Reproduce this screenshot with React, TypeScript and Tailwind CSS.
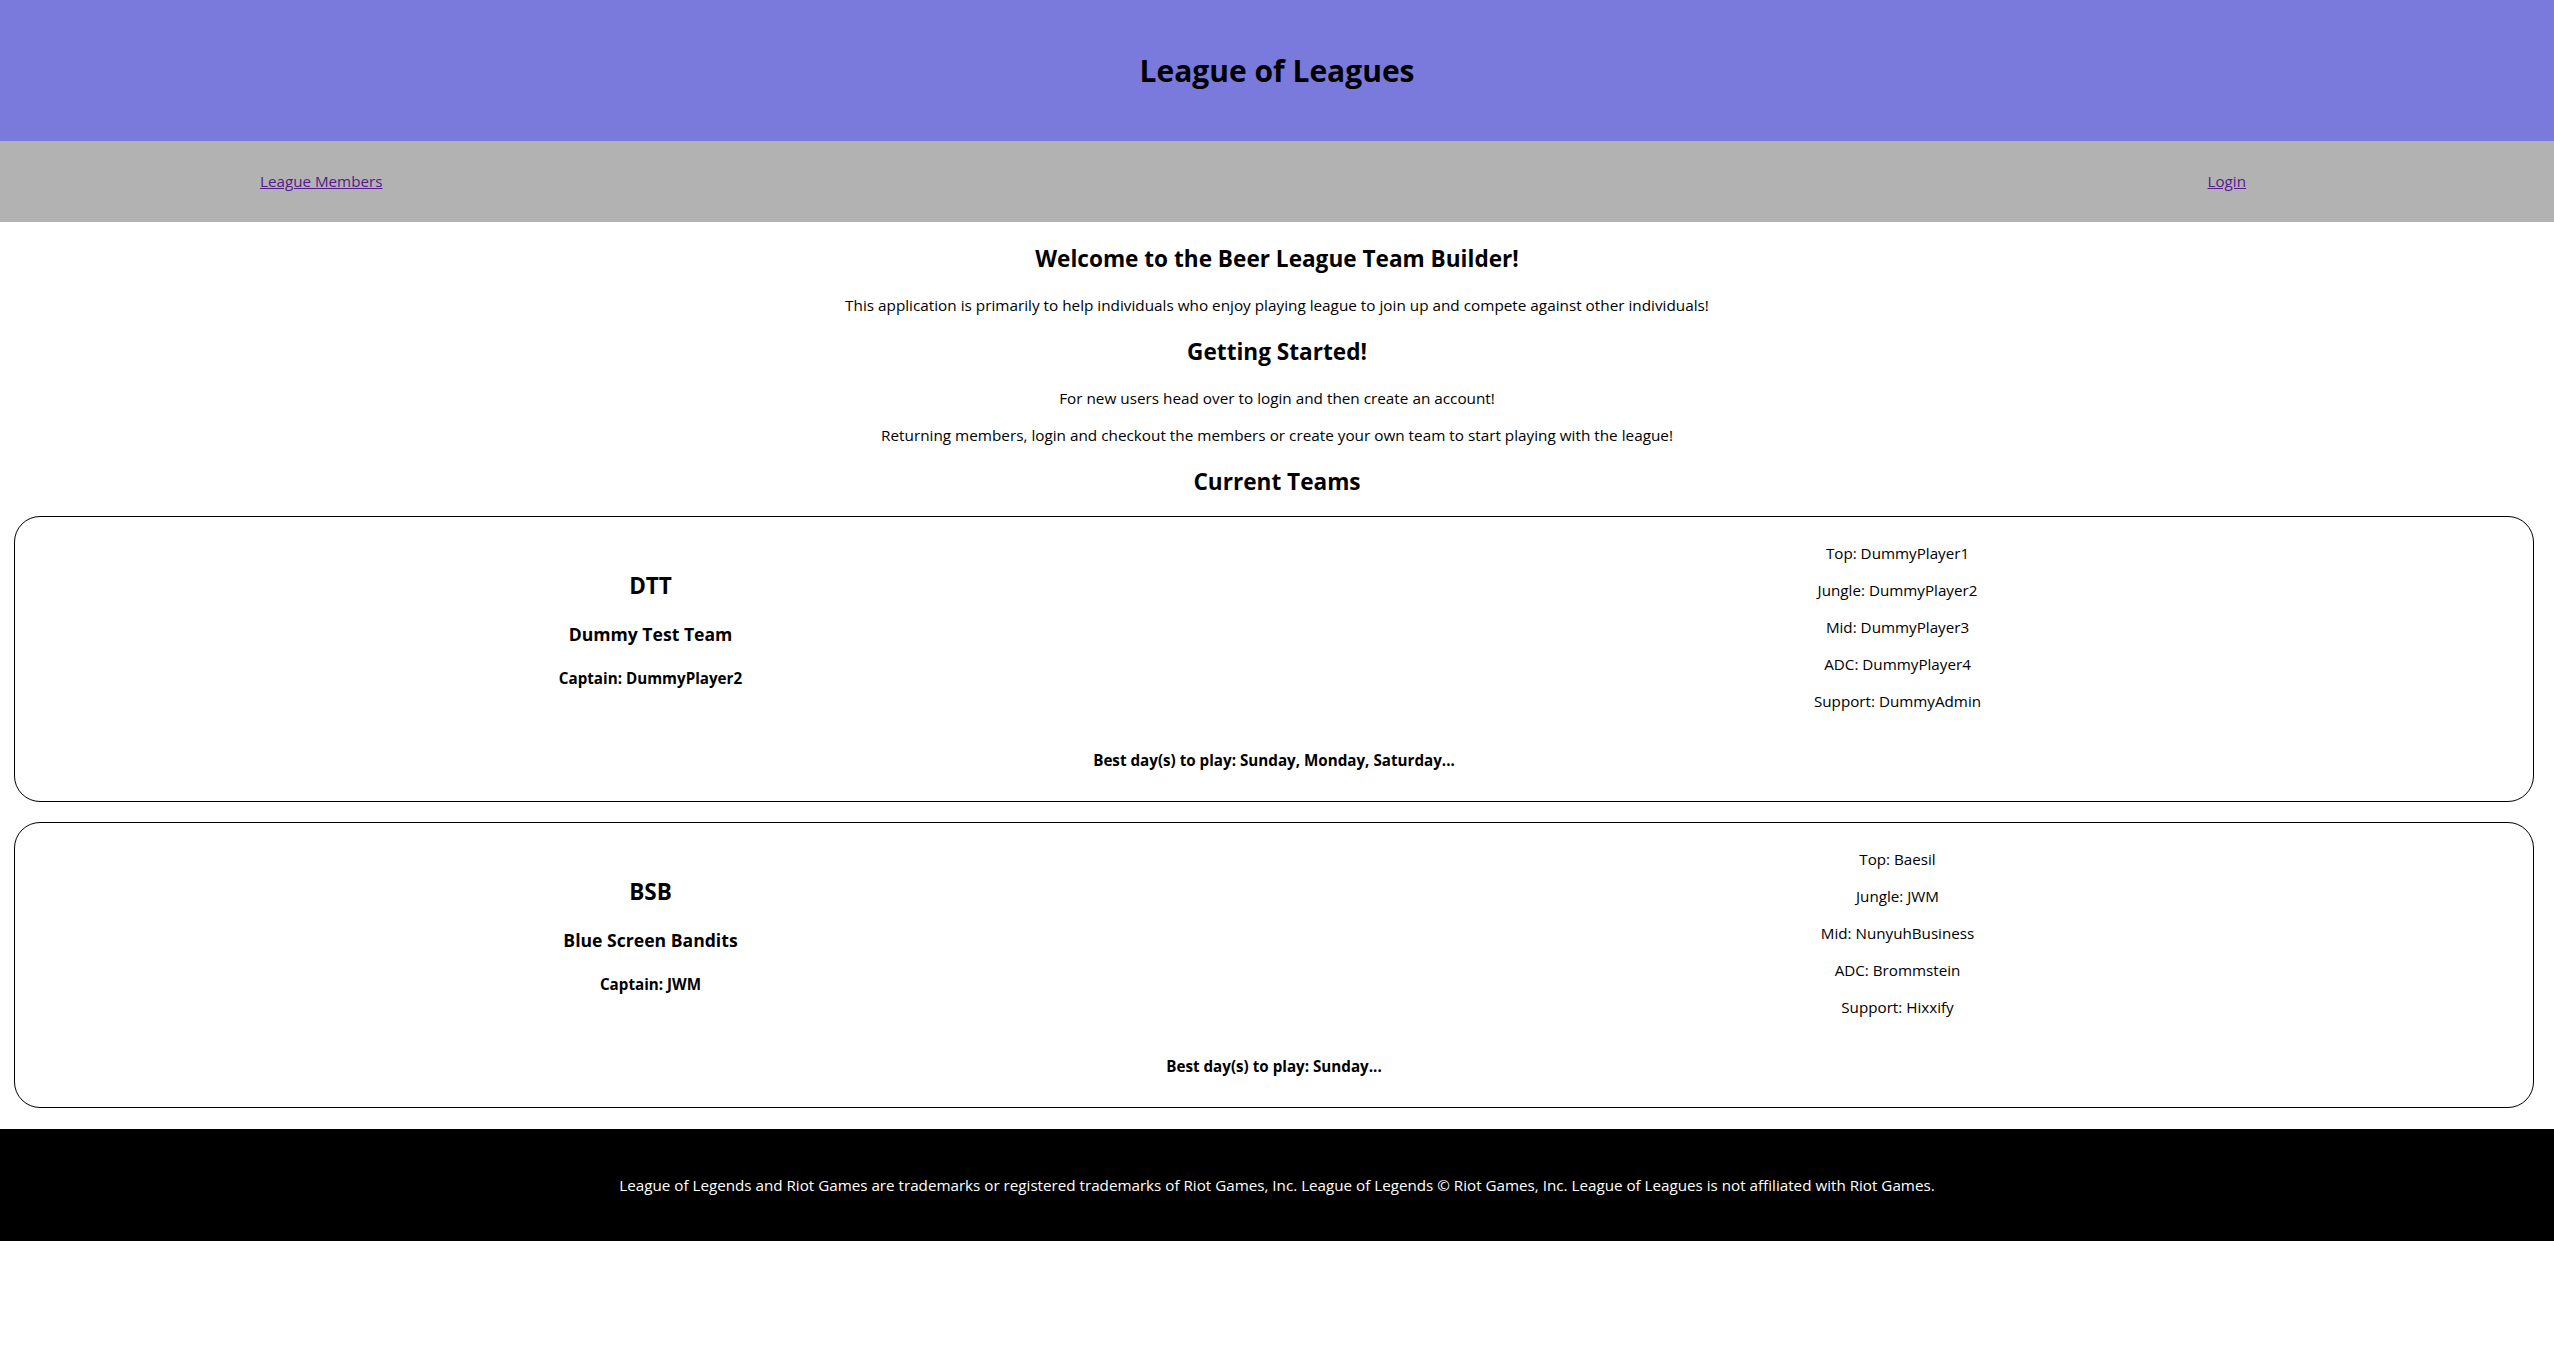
import React from "react";

type Team = {
  tag: string;
  name: string;
  captain: string;
  roles: { role: string; player: string }[];
  days: string;
};

const teams: Team[] = [
  {
    tag: "DTT",
    name: "Dummy Test Team",
    captain: "DummyPlayer2",
    roles: [
      { role: "Top", player: "DummyPlayer1" },
      { role: "Jungle", player: "DummyPlayer2" },
      { role: "Mid", player: "DummyPlayer3" },
      { role: "ADC", player: "DummyPlayer4" },
      { role: "Support", player: "DummyAdmin" },
    ],
    days: "Sunday, Monday, Saturday...",
  },
  {
    tag: "BSB",
    name: "Blue Screen Bandits",
    captain: "JWM",
    roles: [
      { role: "Top", player: "Baesil" },
      { role: "Jungle", player: "JWM" },
      { role: "Mid", player: "NunyuhBusiness" },
      { role: "ADC", player: "Brommstein" },
      { role: "Support", player: "Hixxify" },
    ],
    days: "Sunday...",
  },
];

function TeamCard({ team, first }: { team: Team; first: boolean }) {
  return (
    <div
      className={`${first ? "mt-[18px]" : "mt-[20px]"} ml-[14px] mr-[20px] border border-black rounded-[26px] pt-[10px] pb-[10px]`}
    >
      <div className="flex items-center">
        <div className="w-1/2 flex flex-col items-center text-center pl-[12px] pt-[32px] pb-[20px]">
          <div className="text-[22.5px] font-bold leading-[32px]">{team.tag}</div>
          <div className="mt-[20px] text-[17.6px] font-bold leading-[25px]">{team.name}</div>
          <div className="mt-[21px] text-[15.2px] font-bold leading-[21px]">
            Captain: {team.captain}
          </div>
          <div className="h-[9px]" />
        </div>
        <div className="w-1/2 flex flex-col items-center text-center pr-[12px] py-[16px] gap-[16px]">
          {team.roles.map((r) => (
            <div key={r.role} className="text-[15.2px] leading-[21px]">
              {r.role}: {r.player}
            </div>
          ))}
        </div>
      </div>
      <div className="mt-[22px] mb-[20px] text-center text-[15.2px] font-bold leading-[21px]">
        Best day(s) to play: {team.days}
      </div>
    </div>
  );
}

export default function App() {
  return (
    <div
      className="w-full min-h-[1359px] bg-white text-black"
      style={{ fontFamily: '"Open Sans", "Noto Sans", Arial, sans-serif' }}
    >
      <header className="h-[141px] bg-[#7a7add] flex items-center justify-center">
        <h1 className="text-[30px] font-bold leading-[40px]">League of Leagues</h1>
      </header>
      <nav className="h-[81px] bg-[#b2b2b2] flex items-center justify-between pl-[260px] pr-[308px]">
        <a href="#" className="text-[15.2px] leading-[21px] text-[#551a8b] underline">
          League Members
        </a>
        <a href="#" className="text-[15.2px] leading-[21px] text-[#551a8b] underline">
          Login
        </a>
      </nav>
      <main className="flex flex-col">
        <h2 className="mt-[21px] text-center text-[22.6px] font-bold leading-[32px]">
          Welcome to the Beer League Team Builder!
        </h2>
        <p className="mt-[20px] text-center text-[15.3px] leading-[21px]">
          This application is primarily to help individuals who enjoy playing league to join up and compete against other individuals!
        </p>
        <h2 className="mt-[20px] text-center text-[22.6px] font-bold leading-[32px]">
          Getting Started!
        </h2>
        <p className="mt-[20px] text-center text-[15.3px] leading-[21px]">
          For new users head over to login and then create an account!
        </p>
        <p className="mt-[16px] text-center text-[15.3px] leading-[21px]">
          Returning members, login and checkout the members or create your own team to start playing with the league!
        </p>
        <h2 className="mt-[20px] text-center text-[22.6px] font-bold leading-[32px]">
          Current Teams
        </h2>
        {teams.map((t, i) => (
          <TeamCard key={t.tag} team={t} first={i === 0} />
        ))}
      </main>
      <footer className="mt-[21px] h-[112px] bg-black text-white flex items-center justify-center">
        <p className="text-[15.2px] leading-[21px]">
          League of Legends and Riot Games are trademarks or registered trademarks of Riot Games, Inc. League of Legends © Riot Games, Inc. League of Leagues is not affiliated with Riot Games.
        </p>
      </footer>
    </div>
  );
}
